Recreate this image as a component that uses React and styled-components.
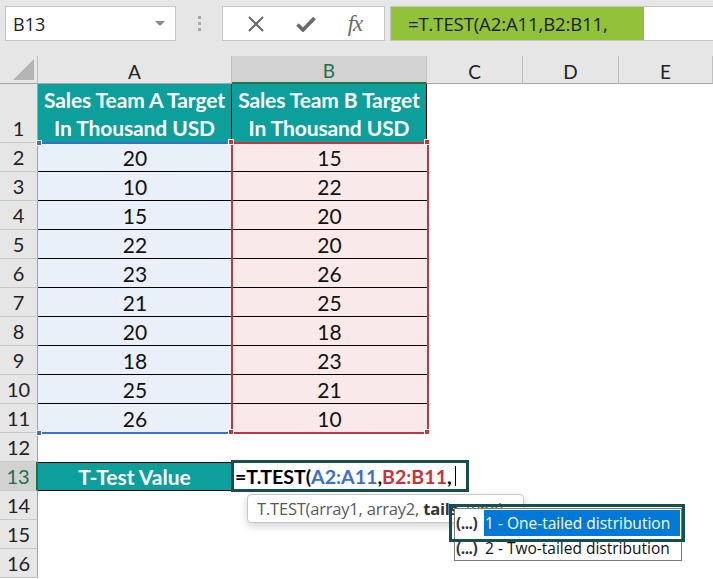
import React from "react";
import styled, { createGlobalStyle } from "styled-components";

const Global = createGlobalStyle`
  html, body { margin: 0; padding: 0; background: #ffffff; overflow: hidden; }
  body { font-family: "Lato", "Liberation Sans", sans-serif; }
  * { box-sizing: border-box; }
`;

const Page = styled.div`
  position: relative;
  width: 713px;
  height: 579px;
  overflow: hidden;
  background: #ffffff;
`;

/* ---------- toolbar ---------- */
const Toolbar = styled.div`
  height: 56px;
  background: #e6e6e6;
  display: flex;
  align-items: flex-start;
  padding: 6px 0 0 5px;
`;

const NameBox = styled.div`
  width: 171px;
  height: 35px;
  background: #fff;
  border: 1px solid #c6c6c6;
  display: flex;
  align-items: center;
  justify-content: space-between;
  padding: 0 10px 0 7px;
  font-family: "Open Sans", "Noto Sans", sans-serif;
  font-size: 18px;
  color: #222;
`;

const Caret = styled.span`
  width: 0;
  height: 0;
  border-left: 5px solid transparent;
  border-right: 5px solid transparent;
  border-top: 5px solid #8a8a8a;
`;

const Grip = styled.div`
  width: 46px;
  height: 35px;
  display: flex;
  flex-direction: column;
  align-items: center;
  justify-content: center;
  gap: 3px;
`;

const GripDot = styled.span`
  width: 3px;
  height: 3px;
  background: #a8a8a8;
`;

const FxBox = styled.div`
  width: 163px;
  height: 35px;
  background: #fff;
  border: 1px solid #c6c6c6;
  display: flex;
  align-items: center;
  justify-content: space-around;
  padding: 0 6px 0 8px;
`;

const Fx = styled.span`
  font-family: "Liberation Serif", "DejaVu Serif", serif;
  font-style: italic;
  font-size: 23px;
  color: #6a6a6a;
  letter-spacing: -1px;
`;

const FormulaField = styled.div`
  flex: 1;
  margin-left: 5px;
  height: 35px;
  background: #fff;
  border: 1px solid #c6c6c6;
  border-right: none;
  display: flex;
  align-items: stretch;
`;

const FormulaHighlight = styled.span`
  width: 253px;
  background: #92c13a;
  display: flex;
  align-items: center;
  padding-left: 17px;
  font-family: "Open Sans", "Noto Sans", sans-serif;
  font-size: 18.5px;
  color: #1c1c1c;
  white-space: nowrap;
  letter-spacing: -0.1px;
`;

/* ---------- sheet ---------- */
const Sheet = styled.div`
  display: grid;
  grid-template-columns: 38px 194px 195px 96px 96px 1fr;
  grid-template-rows: 28px 59px repeat(15, 29px);
  font-family: "Lato", "Liberation Sans", sans-serif;
`;

const Corner = styled.div`
  background: #e6e6e6;
  border-right: 1px solid #bdbdbd;
  border-bottom: 1px solid #a6a6a6;
  position: relative;
  &::after {
    content: "";
    position: absolute;
    right: 3px;
    bottom: 3px;
    width: 0;
    height: 0;
    border-left: 21px solid transparent;
    border-bottom: 21px solid #b5b5b5;
  }
`;

const ColHead = styled.div`
  background: ${(p) => (p.$active ? "#d2d2d2" : "#e6e6e6")};
  color: ${(p) => (p.$active ? "#217346" : "#222")};
  border-right: 1px solid #c0c0c0;
  border-bottom: ${(p) => (p.$active ? "2px solid #217346" : "1px solid #a6a6a6")};
  display: flex;
  align-items: center;
  justify-content: center;
  padding-top: 3px;
  font-size: 19px;
`;

const RowHead = styled.div`
  background: ${(p) => (p.$active ? "#d2d2d2" : "#e6e6e6")};
  color: ${(p) => (p.$active ? "#217346" : "#222")};
  border-right: ${(p) => (p.$active ? "2px solid #217346" : "1px solid #a0a0a0")};
  border-bottom: 1px solid #c8c8c8;
  display: flex;
  align-items: flex-end;
  justify-content: center;
  padding-bottom: 2px;
  font-size: 20px;
  line-height: 24px;
`;

const Cell = styled.div`
  background: ${(p) => p.$bg || "#fff"};
  color: ${(p) => p.$color || "#111"};
  font-weight: ${(p) => (p.$bold ? 700 : 400)};
  border-right: ${(p) => p.$right || "none"};
  border-bottom: ${(p) => p.$bottom || "none"};
  border-top: ${(p) => p.$top || "none"};
  display: flex;
  align-items: center;
  justify-content: center;
  font-size: 21px;
  white-space: nowrap;
`;

const HeadCell = styled(Cell)`
  flex-direction: column;
  justify-content: flex-end;
  line-height: 28px;
  padding-bottom: 1px;
  font-size: 21px;
  letter-spacing: -0.1px;
`;

/* ---------- overlays ---------- */
const RangeBox = styled.div`
  position: absolute;
  left: ${(p) => p.$x}px;
  top: ${(p) => p.$y}px;
  width: ${(p) => p.$w}px;
  height: ${(p) => p.$h}px;
  border: 2px solid ${(p) => p.$c};
  border-left-width: ${(p) => (p.$noLeft ? 0 : 2)}px;
  pointer-events: none;
`;

const Handle = styled.div`
  position: absolute;
  left: ${(p) => p.$x}px;
  top: ${(p) => p.$y}px;
  width: 6px;
  height: 6px;
  background: ${(p) => p.$c};
  border: 1px solid #fff;
`;

const Editor = styled.div`
  position: absolute;
  left: 231px;
  top: 460px;
  width: 238px;
  height: 32px;
  border: 3px solid #164f50;
  background: #fff;
  display: flex;
  align-items: center;
  padding-left: 1px;
  font-family: "Lato", "Liberation Sans", sans-serif;
  font-weight: 700;
  font-size: 19.6px;
  color: #000;
  white-space: nowrap;
`;

const Ref = styled.span`
  color: ${(p) => p.$c};
`;

const CursorBar = styled.span`
  width: 1px;
  height: 20px;
  background: #000;
  margin-left: 3px;
`;

const Tip = styled.div`
  position: absolute;
  left: 247px;
  top: 494px;
  width: 277px;
  height: 29px;
  background: #fff;
  border: 1px solid #c8c8c8;
  border-radius: 4px;
  box-shadow: 0 3px 8px rgba(0, 0, 0, 0.18);
  display: flex;
  align-items: center;
  padding-left: 9px;
  font-family: "Open Sans", "Noto Sans", sans-serif;
  font-size: 16.5px;
  color: #5a5a5a;
  white-space: nowrap;
  letter-spacing: -0.2px;
`;

const TipBold = styled.b`
  color: #333;
  font-weight: 700;
`;

const List = styled.div`
  position: absolute;
  left: 454px;
  top: 508px;
  width: 228px;
  height: 53px;
  background: #fff;
  border: 1px solid #7a7a7a;
  display: flex;
  flex-direction: column;
  padding: 1px 0 0 1px;
`;

const Item = styled.div`
  height: ${(p) => p.$h}px;
  display: flex;
  align-items: center;
  font-family: "Open Sans", "Noto Sans", sans-serif;
  font-size: 15.5px;
  color: #111;
  white-space: nowrap;
`;

const Dots = styled.span`
  width: 28px;
  font-weight: 700;
  color: #333;
  letter-spacing: -0.5px;
`;

const ItemText = styled.span`
  flex: 1;
  align-self: stretch;
  display: flex;
  align-items: center;
  padding-left: 1px;
  background: ${(p) => (p.$sel ? "#0078d7" : "transparent")};
  color: ${(p) => (p.$sel ? "#fff" : "#111")};
  margin-right: 1px;
`;

const Callout = styled.div`
  position: absolute;
  left: 449px;
  top: 504px;
  width: 236px;
  height: 38px;
  border: 3px solid #164f50;
  pointer-events: none;
`;

const A = [20, 10, 15, 22, 23, 21, 20, 18, 25, 26];
const B = [15, 22, 20, 20, 26, 25, 18, 23, 21, 10];
const cols = ["A", "B", "C", "D", "E"];

export default function App() {
  const rows = [];
  for (let r = 1; r <= 16; r++) {
    const cells = [];
    cells.push(
      <RowHead key={`h${r}`} $active={r === 13}>
        {r}
      </RowHead>
    );
    if (r === 1) {
      cells.push(
        <HeadCell key="a" $bg="#0d9f9b" $color="#fff" $bold $right="1px solid #000">
          <span>Sales Team A Target</span>
          <span>In Thousand USD</span>
        </HeadCell>
      );
      cells.push(
        <HeadCell key="b" $bg="#0d9f9b" $color="#fff" $bold $right="1px solid #000">
          <span>Sales Team B Target</span>
          <span>In Thousand USD</span>
        </HeadCell>
      );
    } else if (r <= 11) {
      const last = r === 11;
      cells.push(
        <Cell key="a" $bg="#e9f0fa" $bottom={last ? "none" : "1px solid #000"}>
          {A[r - 2]}
        </Cell>
      );
      cells.push(
        <Cell key="b" $bg="#f9e9e9" $bottom={last ? "none" : "1px solid #000"}>
          {B[r - 2]}
        </Cell>
      );
    } else if (r === 13) {
      cells.push(
        <Cell key="a" $bg="#0d9f9b" $color="#fff" $bold $top="1px solid #000" $bottom="1px solid #000" $right="1px solid #000">
          T-Test Value
        </Cell>
      );
      cells.push(<Cell key="b" />);
    } else {
      cells.push(<Cell key="a" />);
      cells.push(<Cell key="b" />);
    }
    cells.push(<Cell key="c" />);
    cells.push(<Cell key="d" />);
    cells.push(<Cell key="e" />);
    rows.push(...cells);
  }

  return (
    <Page>
      <Global />
      <Toolbar>
        <NameBox>
          <span>B13</span>
          <Caret />
        </NameBox>
        <Grip>
          <GripDot />
          <GripDot />
          <GripDot />
        </Grip>
        <FxBox>
          <svg width="18" height="18" viewBox="0 0 18 18">
            <path d="M2 2 L16 16 M16 2 L2 16" stroke="#6a6a6a" strokeWidth="2.2" fill="none" />
          </svg>
          <svg width="20" height="16" viewBox="0 0 20 16">
            <path d="M1.5 8.5 L7 14 L18.5 2" stroke="#6a6a6a" strokeWidth="3.6" fill="none" />
          </svg>
          <Fx>fx</Fx>
        </FxBox>
        <FormulaField>
          <FormulaHighlight>=T.TEST(A2:A11,B2:B11,</FormulaHighlight>
        </FormulaField>
      </Toolbar>
      <Sheet>
        <Corner />
        {cols.map((c) => (
          <ColHead key={c} $active={c === "B"}>
            {c}
          </ColHead>
        ))}
        {rows}
      </Sheet>

      <RangeBox $x={38} $y={142} $w={195} $h={292} $c="#3a70c8" $noLeft />
      <Handle $x={36} $y={140} $c="#3a70c8" />
      <Handle $x={36} $y={430} $c="#3a70c8" />
      <RangeBox $x={231} $y={142} $w={198} $h={292} $c="#c6343e" />
      <Handle $x={228} $y={139} $c="#c6343e" />
      <Handle $x={424} $y={139} $c="#c6343e" />
      <Handle $x={228} $y={429} $c="#c6343e" />
      <Handle $x={424} $y={429} $c="#c6343e" />

      <Editor>
        <span>=T.TEST(</span>
        <Ref $c="#3b6fd0">A2:A11</Ref>
        <span>,</span>
        <Ref $c="#c8323c">B2:B11</Ref>
        <span>,</span>
        <CursorBar />
      </Editor>

      <Tip>
        T.TEST(array1, array2,&nbsp;<TipBold>tails</TipBold>, type)
      </Tip>

      <List>
        <Item $h={26}>
          <Dots>(...)</Dots>
          <ItemText $sel>1 - One-tailed distribution</ItemText>
        </Item>
        <Item $h={24}>
          <Dots>(...)</Dots>
          <ItemText>2 - Two-tailed distribution</ItemText>
        </Item>
      </List>
      <Callout />
    </Page>
  );
}
